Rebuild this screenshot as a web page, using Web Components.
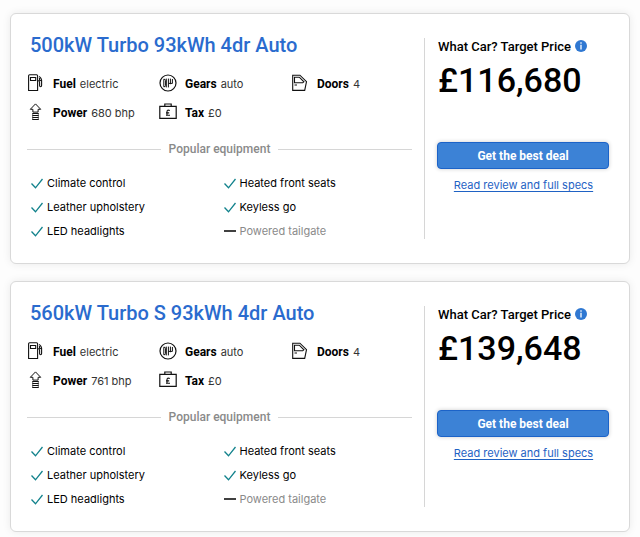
<!DOCTYPE html>
<html lang="en">
<head>
<meta charset="utf-8">
<meta name="viewport" content="width=device-width, initial-scale=1">
<title>Trim prices</title>
<style>
  body { margin: 0; background: #fdfdfd; color: #000; font-family: Roboto, "Liberation Sans", sans-serif; font-size: 12px; }
</style>
</head>
<body>
<trim-list>
  <trim-card price="£116,680" power="680 bhp">500kW Turbo 93kWh 4dr Auto</trim-card>
  <trim-card price="£139,648" power="761 bhp">560kW Turbo S 93kWh 4dr Auto</trim-card>
</trim-list>

<template id="list-t">
  <style>
    :host { display: flex; flex-direction: column; gap: 17px; padding: 13px 10px 5px; }
  </style>
  <slot></slot>
</template>

<template id="stat-t">
  <style>
    :host { display: flex; height: 20px; gap: 8px; line-height: 20px; font-size: 11px; color: #333; white-space: nowrap; font-family: Inter, sans-serif; }
    svg { width: 18px; height: 18px; flex: none; fill: none; stroke: #111; stroke-width: 1.2; }
    b { color: #000; font-size: 12px; font-weight: 700; font-family: Roboto, sans-serif; margin-right: 4px; }
  </style>
  <svg viewBox="0 0 18 18" aria-hidden="true"></svg>
  <span><b></b><slot></slot></span>
</template>

<template id="feature-t">
  <style>
    :host { display: flex; align-items: center; gap: 4px; line-height: 16px; font-size: 11px; font-family: Inter, sans-serif; white-space: nowrap; }
    :host([missing]) { color: #8a8a8a; }
    svg { width: 12px; height: 12px; flex: none; fill: none; stroke: #12828c; stroke-width: 1.3; }
    :host([missing]) svg { stroke: #111; stroke-width: 1.6; }
  </style>
  <svg viewBox="0 0 12 12" aria-hidden="true"><path/></svg>
  <slot></slot>
</template>

<template id="card-t">
  <style>
    :host { display: grid; grid-template-columns: minmax(0, 1fr) 185px; column-gap: 12px; padding: 18px 20px 24px 16px; border: 1px solid #d9d9d9; border-radius: 6px; background: #fff; box-shadow: 0 0 8px rgba(0,0,0,.08); }
    h2 { margin: 0 0 16px 3px; font-size: 20px; line-height: 26px; font-weight: 500; color: #2a6bce; }
    .stats { display: grid; grid-template-columns: repeat(3, 132px); row-gap: 9px; }
    .divider { display: flex; align-items: center; gap: 8px; margin: 16px 0; line-height: 20px; font-size: 12px; font-weight: 500; color: #8a8a8a; }
    .divider::before, .divider::after { content: ""; flex: 1; height: 1px; background: #d6d6d6; }
    .features { display: grid; grid-template-columns: 1fr 1fr; column-gap: 4px; row-gap: 8px; padding-left: 4px; }
    aside { margin-top: 6px; padding-left: 13px; border-left: 1px solid #d6d6d6; display: flex; flex-direction: column; }
    .label { display: flex; align-items: center; gap: 4px; font-size: 13px; line-height: 18px; font-weight: 500; }
    .info { width: 12px; height: 12px; padding: 0; border: 0; background: none; margin-bottom: 3px; }
    .info svg { display: block; }
    .price { font-size: 34px; line-height: 40px; margin-top: 4px; font-weight: 500; }
    .deal { height: 27px; margin: 42px 0 0 -1px; border: 1px solid #1c63c8; border-radius: 4px; background: #3c82d6; color: #fff; font: 700 12px Roboto, sans-serif; box-shadow: 0 0 4px rgba(0,0,0,.2); }
    a { align-self: center; margin-top: 8px; font: 11px/16px Inter, sans-serif; color: #1f62c4; text-underline-offset: 2px; white-space: nowrap; }
  </style>
  <div>
    <h2><slot></slot></h2>
    <div class="stats">
      <trim-stat kind="Fuel">electric</trim-stat>
      <trim-stat kind="Gears">auto</trim-stat>
      <trim-stat kind="Doors">4</trim-stat>
      <trim-stat kind="Power" class="power"></trim-stat>
      <trim-stat kind="Tax">£0</trim-stat>
    </div>
    <div class="divider">Popular equipment</div>
    <div class="features">
      <trim-feature>Climate control</trim-feature>
      <trim-feature>Heated front seats</trim-feature>
      <trim-feature>Leather upholstery</trim-feature>
      <trim-feature>Keyless go</trim-feature>
      <trim-feature>LED headlights</trim-feature>
      <trim-feature missing>Powered tailgate</trim-feature>
    </div>
  </div>
  <aside>
    <div class="label">What Car? Target Price
      <button class="info" aria-label="About Target Price"><svg viewBox="0 0 12 12" width="12" height="12"><circle cx="6" cy="6" r="6" fill="#2f78d2"/><path d="M6 2.3v1.4M6 4.8v4.6" stroke="#fff" stroke-width="1.3"/></svg></button>
    </div>
    <div class="price"></div>
    <button class="deal">Get the best deal</button>
    <a href="#review">Read review and full specs</a>
  </aside>
</template>

<script>
  const attach = (host, id) => {
    const root = host.attachShadow({ mode: "open" });
    root.append(document.getElementById(id).content.cloneNode(true));
    return root;
  };
  const icons = {
    Fuel: '<path stroke-width="1.1" d="M1.6 16.5V1.8Q1.6.8 2.6.8h7q1 0 1 1v14.7zM3.5 3.5h5.2v3H3.5zM11 6.5q1.6 0 1.6 2v3q0 1.2 1 1.2t1-1.2V6q0-1.6-2.4-3.6M12.6 4v2.2l2 .8"/>',
    Gears: '<circle cx="9" cy="9" r="8"/><path stroke-width="1" d="M4.8 5.2v7.6M7.3 4.6v8.8M4.8 5.2q1.8 0 1.8 1.2v5.2q0 1.2-1.8 1.2M9.4 4.6v8.8M11.4 4.6v5.6M13.4 5v4.4H9.4"/>',
    Doors: '<path stroke-width="1.1" d="M1.7 1.2h7.2l6.6 6.4-1.8 8.8h-12zM3.5 3.2h4.8l4.6 4.6-1.2 1H3.5zM3.5 11h2.5"/>',
    Power: '<path stroke-width="1" d="M8.5.9l5.2 5.4h-2.6v2.8H5.9V6.3H3.3z"/><path stroke-width="1.1" d="M5.4 10.5h6.2M5.4 12.5h6.2M5.4 14.5h6.2M5.4 16.5h6.2"/><path stroke-width=".6" d="M5.7 10v7M11.3 10v7"/>',
    Tax: '<path d="M.8 3.4h16.4v12H.8zM5.8 3.4V1h6.4v2.4"/><path stroke-width="1.1" d="M10.8 7.6Q8 6.2 8 8.8v3.4M7 12.3h4M7 9.9h3.2"/>'
  };
  customElements.define("trim-list", class extends HTMLElement {
    constructor() { super(); attach(this, "list-t"); }
  });
  customElements.define("trim-stat", class extends HTMLElement {
    connectedCallback() {
      if (this.shadowRoot) return;
      const root = attach(this, "stat-t"), kind = this.getAttribute("kind");
      root.querySelector("svg").innerHTML = icons[kind];
      root.querySelector("b").textContent = kind;
    }
  });
  customElements.define("trim-feature", class extends HTMLElement {
    connectedCallback() {
      if (this.shadowRoot) return;
      const root = attach(this, "feature-t");
      root.querySelector("path").setAttribute("d", this.hasAttribute("missing") ? "M0 6h12" : "M.5 6.5l4 4.3L11.5 2");
    }
  });
  customElements.define("trim-card", class extends HTMLElement {
    connectedCallback() {
      if (this.shadowRoot) return;
      const root = attach(this, "card-t");
      root.querySelector(".price").textContent = this.getAttribute("price");
      root.querySelector(".power").textContent = this.getAttribute("power");
    }
  });
</script>
</body>
</html>
